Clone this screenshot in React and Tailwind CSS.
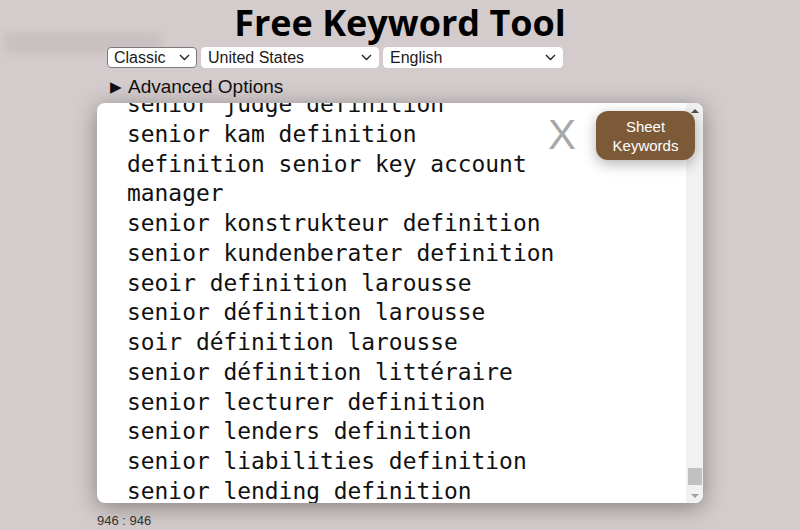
import { useState } from "react";

const KEYWORDS = [
  "senior judge definition",
  "senior kam definition",
  "definition senior key account",
  "manager",
  "senior konstrukteur definition",
  "senior kundenberater definition",
  "seoir definition larousse",
  "senior définition larousse",
  "soir définition larousse",
  "senior définition littéraire",
  "senior lecturer definition",
  "senior lenders definition",
  "senior liabilities definition",
  "senior lending definition",
];

function Chevron() {
  return (
    <svg width="11" height="7" viewBox="0 0 11 7" className="shrink-0">
      <path d="M1 1l4.5 4.5L10 1" fill="none" stroke="#222" strokeWidth="1.4" />
    </svg>
  );
}

function FakeSelect({ label, width, bordered }) {
  return (
    <div
      className={`flex h-[21px] items-center justify-between rounded-[4px] bg-white pl-[6px] pr-[6px] text-[16px] text-[#1a1a1a] ${width} ${
        bordered ? "border border-[#7a7a7a]" : "border border-white"
      }`}
    >
      <span className="leading-none">{label}</span>
      <Chevron />
    </div>
  );
}

export default function App() {
  const [open, setOpen] = useState(false);

  return (
    <div
      className="relative min-h-[530px] w-full overflow-hidden bg-[#d4cccc]"
      style={{ fontFamily: '"Liberation Sans", Arial, sans-serif' }}
    >
      {/* faint ghost bar on the left */}
      <div className="absolute left-[4px] top-[32px] h-[22px] w-[158px] rounded-md bg-[#c9c1c1] blur-[3px]" />

      <div className="relative mx-auto w-[606px]">
        <h1
          className="text-center text-[36px] font-bold leading-[46px] text-black"
          style={{ fontFamily: '"Open Sans", sans-serif' }}
        >
          Free Keyword Tool
        </h1>

        <div className="mt-[1px] flex gap-[4px] pl-[10px]">
          <FakeSelect label="Classic" width="w-[90px]" bordered />
          <FakeSelect label="United States" width="w-[178px]" />
          <FakeSelect label="English" width="w-[180px]" />
        </div>

        <button
          onClick={() => setOpen(!open)}
          className="mt-[7px] ml-[13px] flex items-center gap-[6px] text-[19px] leading-[24px] text-[#111]"
        >
          <span className="text-[15px] leading-[24px]">{open ? "▼" : "▶"}</span>
          Advanced Options
        </button>

        <div className="relative mt-[4px] h-[400px] overflow-hidden rounded-[8px] bg-white shadow-[0_4px_22px_rgba(0,0,0,0.38)]">
          <div
            className="-mt-[13px] whitespace-pre pl-[30px] text-[22.9px] leading-[29.75px] text-[#111]"
            style={{ fontFamily: '"DejaVu Sans Mono", monospace' }}
          >
            {KEYWORDS.map((k, i) => (
              <div key={i}>{k}</div>
            ))}
          </div>

          {/* scrollbar */}
          <div className="absolute right-0 top-0 flex h-full w-[17px] flex-col items-center bg-[#f1f1f1]">
            <div className="mt-[6px] h-0 w-0 border-x-[4px] border-b-[4px] border-x-transparent border-b-[#505050]" />
            <div className="flex-1" />
            <div className="h-[17px] w-[14px] bg-[#c1c1c1]" />
            <div className="mb-[5px] mt-[9px] h-0 w-0 border-x-[4px] border-t-[4px] border-x-transparent border-t-[#a0a0a0]" />
          </div>

          <span
            className="absolute left-[451px] top-[8px] text-[42px] font-light leading-[48px] text-[#a8a8a8]"
            style={{ fontFamily: '"Liberation Sans", sans-serif' }}
          >
            X
          </span>

          <button className="absolute left-[499px] top-[8px] flex h-[49px] w-[99px] flex-col items-center justify-center rounded-[12px] bg-[#7c5a37] text-[15px] leading-[19px] text-white shadow-[0_4px_14px_rgba(0,0,0,0.3)]">
            <span>Sheet</span>
            <span>Keywords</span>
          </button>
        </div>

        <div className="mt-[10px] text-[13px] leading-[15px] text-[#333]">946 : 946</div>
      </div>
    </div>
  );
}
